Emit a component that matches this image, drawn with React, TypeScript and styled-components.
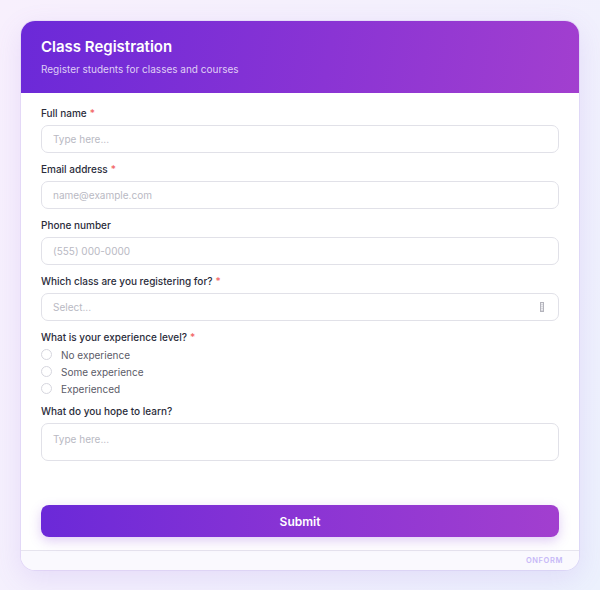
import React from "react";
import styled, { createGlobalStyle } from "styled-components";

const GlobalStyle = createGlobalStyle`
  * {
    box-sizing: border-box;
  }
  html, body {
    margin: 0;
    padding: 0;
  }
  body {
    font-family: Inter, "Noto Sans", sans-serif;
    background: linear-gradient(120deg, #f8f0fd 0%, #f3f0fd 50%, #ecf1fd 100%);
    min-height: 590px;
  }
`;

const Page = styled.div`
  padding: 21px;
  height: 590px;
`;

const Card = styled.div`
  width: 558px;
  background: #ffffff;
  border-radius: 14px;
  overflow: hidden;
  box-shadow: 0 8px 28px rgba(140, 90, 220, 0.14), 0 0 0 1px rgba(200, 180, 240, 0.25);
`;

const Header = styled.div`
  height: 72px;
  padding: 17px 20px 0;
  background: linear-gradient(100deg, #6b29d8 0%, #8a34d4 55%, #a23fcf 100%);
  display: flex;
  flex-direction: column;
  gap: 6px;
`;

const Title = styled.h1`
  margin: 0;
  font-size: 15px;
  line-height: 18px;
  font-weight: 600;
  color: #ffffff;
`;

const Subtitle = styled.p`
  margin: 0;
  font-size: 10px;
  line-height: 14px;
  color: rgba(255, 255, 255, 0.78);
`;

const Body = styled.form`
  padding: 13px 20px 13px;
  display: flex;
  flex-direction: column;
`;

const Field = styled.div<{ $after?: number }>`
  display: flex;
  flex-direction: column;
  margin-bottom: ${(p) => p.$after ?? 9}px;
`;

const Label = styled.label`
  font-size: 10px;
  line-height: 14px;
  font-weight: 500;
  color: #2b2d3b;
  margin-bottom: 5px;
`;

const Required = styled.span`
  color: #f26464;
  margin-left: 3px;
`;

const Input = styled.input`
  height: 28px;
  width: 100%;
  border: 1px solid #e1e1e8;
  border-radius: 7px;
  padding: 0 11px;
  font-family: inherit;
  font-size: 10px;
  color: #2b2b3a;
  background: #fff;
  outline: none;

  &::placeholder {
    color: #b9b9c3;
  }
`;

const SelectBox = styled.div`
  height: 28px;
  border: 1px solid #e1e1e8;
  border-radius: 7px;
  padding: 0 12px 0 11px;
  display: flex;
  align-items: center;
  justify-content: space-between;
  font-size: 10px;
  color: #b9b9c3;
`;

const Caret = styled.span`
  width: 4px;
  height: 10px;
  border: 1px solid #b4b4bc;
  background: repeating-linear-gradient(0deg, #d8d8de 0 1px, #ededf0 1px 2px);
  margin-right: 2px;
`;

const RadioGroup = styled.div`
  display: flex;
  flex-direction: column;
  margin-top: -3px;
`;

const RadioRow = styled.label`
  height: 17px;
  display: flex;
  align-items: center;
  gap: 9px;
  font-size: 10px;
  color: #5b5b68;
`;

const RadioDot = styled.span`
  width: 11px;
  height: 11px;
  border-radius: 50%;
  border: 1px solid #d6d6de;
  background: #fff;
`;

const TextArea = styled.textarea`
  display: block;
  height: 38px;
  width: 100%;
  resize: none;
  border: 1px solid #e1e1e8;
  border-radius: 7px;
  padding: 8px 11px;
  font-family: inherit;
  font-size: 10px;
  line-height: 14px;
  outline: none;

  &::placeholder {
    color: #b9b9c3;
  }
`;

const SubmitButton = styled.button`
  margin-top: 44px;
  height: 32px;
  width: 100%;
  border: none;
  border-radius: 8px;
  background: linear-gradient(90deg, #6b29d8 0%, #8a34d4 50%, #a23fcf 100%);
  box-shadow: 0 4px 12px rgba(130, 60, 215, 0.25);
  color: #ffffff;
  font-family: inherit;
  font-size: 12px;
  font-weight: 600;
`;

const Footer = styled.div`
  height: 20px;
  border-top: 1px solid #e6e4ee;
  background: #faf9fe;
  display: flex;
  align-items: center;
  justify-content: flex-end;
  padding-right: 16px;
  font-size: 7.5px;
  font-weight: 600;
  letter-spacing: 0.6px;
  color: #c6b8f7;
`;

const experience = ["No experience", "Some experience", "Experienced"];

const App = () => {
  return (
    <>
      <GlobalStyle />
      <Page>
        <Card>
          <Header>
            <Title>Class Registration</Title>
            <Subtitle>Register students for classes and courses</Subtitle>
          </Header>
          <Body onSubmit={(e) => e.preventDefault()}>
            <Field>
              <Label>
                Full name<Required>*</Required>
              </Label>
              <Input placeholder="Type here..." />
            </Field>
            <Field>
              <Label>
                Email address<Required>*</Required>
              </Label>
              <Input placeholder="name@example.com" />
            </Field>
            <Field>
              <Label>Phone number</Label>
              <Input placeholder="(555) 000-0000" />
            </Field>
            <Field>
              <Label>
                Which class are you registering for?<Required>*</Required>
              </Label>
              <SelectBox>
                <span>Select...</span>
                <Caret />
              </SelectBox>
            </Field>
            <Field $after={7}>
              <Label>
                What is your experience level?<Required>*</Required>
              </Label>
              <RadioGroup>
                {experience.map((item) => (
                  <RadioRow key={item}>
                    <RadioDot />
                    {item}
                  </RadioRow>
                ))}
              </RadioGroup>
            </Field>
            <Field $after={0}>
              <Label>What do you hope to learn?</Label>
              <TextArea placeholder="Type here..." />
            </Field>
            <SubmitButton type="submit">Submit</SubmitButton>
          </Body>
          <Footer>ONFORM</Footer>
        </Card>
      </Page>
    </>
  );
};

export default App;
